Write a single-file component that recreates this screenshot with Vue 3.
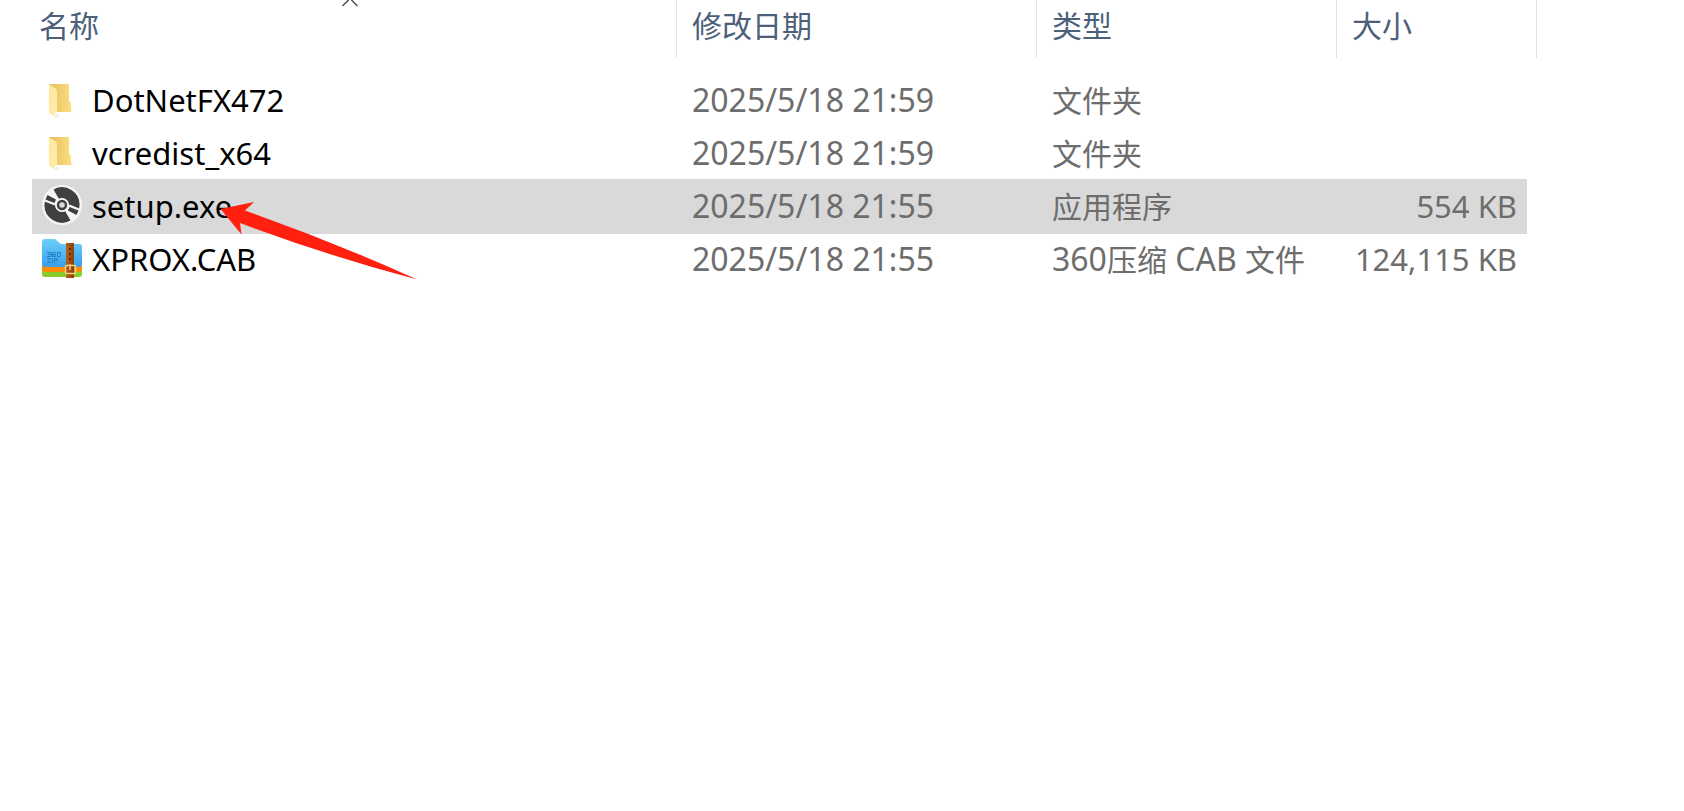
<script setup>
import { ref } from 'vue';

const files = [
    { name: 'DotNetFX472', icon: 'folder', date: '2025/5/18 21:59', type: '文件夹', size: '' },
    { name: 'vcredist_x64', icon: 'folder', date: '2025/5/18 21:59', type: '文件夹', size: '' },
    { name: 'setup.exe', icon: 'disc', date: '2025/5/18 21:55', type: '应用程序', size: '554 KB' },
    { name: 'XPROX.CAB', icon: 'zip', date: '2025/5/18 21:55', type: '360压缩 CAB 文件', size: '124,115 KB' },
];

const selected = ref('setup.exe');

// Chinese runs are set slightly smaller than the latin ones
const splitRuns = (text) =>
    text.split(/([\u4e00-\u9fff]+)/).filter(Boolean).map((run) => ({
        text: run,
        han: /[\u4e00-\u9fff]/.test(run),
    }));
</script>

<template>
    <main class="explorer">
        <table class="files">
            <colgroup>
                <col>
                <col class="col-date">
                <col class="col-type">
                <col class="col-size">
                <col class="col-end">
            </colgroup>
            <thead>
                <tr>
                    <th aria-sort="ascending">
                        <button class="head head-name">
                            名称
                            <svg class="sort" viewBox="0 0 16 8" aria-hidden="true">
                                <path d="M0.5 6 L8 -1.5 L15.5 6" fill="none" stroke="#444" stroke-width="1.3" />
                            </svg>
                        </button>
                    </th>
                    <th><button class="head">修改日期</button></th>
                    <th><button class="head">类型</button></th>
                    <th colspan="2"><button class="head">大小</button></th>
                </tr>
            </thead>
            <tbody>
                <tr
                    v-for="file in files"
                    :key="file.name"
                    :class="{ selected: file.name === selected }"
                    @click="selected = file.name"
                >
                    <td class="name">
                        <div class="name-box">
                            <svg v-if="file.icon === 'folder'" class="icon" viewBox="0 0 40 40" aria-hidden="true">
                                <defs>
                                    <linearGradient id="back" x1="0" y1="0" x2="1" y2="0">
                                        <stop offset="0.2" stop-color="#e9c463" />
                                        <stop offset="1" stop-color="#fbdd80" />
                                    </linearGradient>
                                    <linearGradient id="flap" x1="0" y1="0" x2="1" y2="1">
                                        <stop offset="0" stop-color="#ffe59a" />
                                        <stop offset="1" stop-color="#ffeeb2" />
                                    </linearGradient>
                                </defs>
                                <path d="M13 39 L18 37 L14 34 Z M29 34 L32 33 L29 31 Z" fill="#eee" />
                                <path d="M7 5 H27 V22 L29 24 V33 H13 Z" fill="url(#back)" />
                                <path d="M7 5 L13 9 Q15 10 15 12 V33 L13 34 V38.5 L7 33.500 Z" fill="url(#flap)" />
                            </svg>
                            <svg v-else-if="file.icon === 'disc'" class="icon" viewBox="0 0 40 40" aria-hidden="true">
                                <circle cx="20" cy="20" r="20" fill="#f5f5f5" />
                                <path d="M11.500 4.500 A17.500 17.500 0 0 1 37.500 21 L36.800 24.500 L26.500 20.500 A6.500 6.500 0 0 0 17 14 Z" fill="#404040" />
                                <path d="M28.500 35.500 A17.500 17.500 0 0 1 2.500 19 L3.200 15.500 L13.500 19.500 A6.500 6.500 0 0 0 23 26 Z" fill="#404040" />
                                <path d="M3 15.500 L13 19.500 M37 24.500 L27 20.500" stroke="#f5f5f5" stroke-width="2" />
                                <path d="M5.500 10 L14 14.500 L12.500 18 L3.500 14.500 Z M34.500 30 L26 25.500 L27.500 22 L36.500 25.500 Z" fill="#404040" />
                                <circle cx="20" cy="20" r="7" fill="#f5f5f5" />
                                <circle cx="20" cy="20" r="4" fill="#d9d9d9" stroke="#404040" stroke-width="2.400" />
                            </svg>
                            <svg v-else class="icon" viewBox="0 0 40 40" aria-hidden="true">
                                <defs>
                                    <linearGradient id="blue" x1="0" y1="0" x2="0" y2="1">
                                        <stop offset="0" stop-color="#6bd0fa" />
                                        <stop offset="1" stop-color="#3b9fec" />
                                    </linearGradient>
                                    <linearGradient id="belt" x1="0" y1="0" x2="1" y2="0">
                                        <stop offset="0" stop-color="#b8621c" />
                                        <stop offset="1" stop-color="#8a3e0a" />
                                    </linearGradient>
                                </defs>
                                <path d="M0 30 H40 V36 Q40 39 37 39 H3 Q0 39 0 36 Z" fill="#85cc2c" />
                                <path d="M0 26 H40 V31 Q40 34 37 34 H3 Q0 34 0 31 Z" fill="#ff8d0a" />
                                <path d="M0 4 Q0 1 3 1 H13 L19 6 H37 Q40 6 40 9 V26 Q40 29 37 29 H3 Q0 29 0 26 Z" fill="url(#blue)" />
                                <g fill="none" stroke="#237fc9" stroke-width="1">
                                    <path d="M5 14.5 H9 V18.5 H5 M6 16.5 H9 M14 14.5 H10.5 V18.5 H13.5 V16.5 H11 M15.5 14.5 H18.5 V18.5 H15.5 Z" />
                                    <path d="M5 20.5 H8.5 L5.5 24.5 H9 M10.5 20 V25 M12.5 25 V20.5 H15.5 V22.5 H12.5" />
                                </g>
                                <rect x="24" y="5" width="8" height="35" fill="url(#belt)" />
                                <path d="M27 10h2v2h-2z M27 15h2v2h-2z M27 20h2v2h-2z" fill="#59290a" />
                                <rect x="23.5" y="27.5" width="10" height="8" rx="1" fill="none" stroke="#f5cf7a" stroke-width="1.5" />
                                <path d="M28 26 V32" stroke="#f5cf7a" stroke-width="1.5" />
                            </svg>
                            <span>{{ file.name }}</span>
                            <svg v-if="file.name === 'setup.exe'" class="pointer" viewBox="0 0 198 78" aria-hidden="true">
                                <path d="M0.5 7 L34 0 L25 8.5 Q112 39 197 77.500 Q108 54 20 21 L21.500 32.500 Z" fill="#ff2010" />
                            </svg>
                        </div>
                    </td>
                    <td class="date">{{ file.date }}</td>
                    <td class="type">
                        <span v-for="(run, i) in splitRuns(file.type)" :key="i" :class="{ han: run.han }">{{ run.text }}</span>
                    </td>
                    <td class="size">{{ file.size }}</td>
                </tr>
            </tbody>
        </table>
    </main>
</template>

<style>
body {
    background: #fff;
}
</style>

<style scoped>
.explorer {
    padding: 0 147px 0 32px;
    font-family: "Noto Sans", "Noto Sans CJK SC", sans-serif;
    font-size: 31px;
    line-height: 40px;
    color: #6d6d6d;
}

.files {
    width: 100%;
    table-layout: fixed;
    border-collapse: separate;
    border-spacing: 0;
}

.col-date {
    width: 360px;
}

.col-type {
    width: 300px;
}

.col-size {
    width: 190px;
}

.col-end {
    width: 10px;
}

th {
    padding: 0 0 16px;
}

.head {
    position: relative;
    display: block;
    width: 100%;
    height: 58px;
    padding: 0 15px 10px;
    border: 0;
    border-right: 1px solid #e2e2e2;
    background: none;
    color: #4c607a;
    font-family: "Noto Sans CJK SC", sans-serif;
    font-size: 30px;
    line-height: 40px;
    text-align: left;
}

.head-name {
    width: calc(100% + 8px);
    margin-left: -8px;
}

.sort {
    position: absolute;
    top: 0;
    left: 50%;
    width: 16px;
    height: 8px;
    margin-left: -8px;
}

td {
    box-sizing: border-box;
    height: 53px;
    padding: 0 0 2px 15px;
    white-space: nowrap;
}

td.name {
    padding-left: 10px;
    color: #000;
}

.name-box {
    position: relative;
    display: flex;
    align-items: center;
    gap: 10px;
}

.icon {
    flex: none;
    width: 40px;
    height: 40px;
    margin-bottom: 2px;
}

.pointer {
    position: absolute;
    z-index: 1;
    top: 17px;
    left: 178px;
    width: 198px;
    height: 78px;
}

td.date,
td.type {
    font-size: 32px;
}

td.type {
    padding-bottom: 0;
}

td.size {
    padding: 0 10px 2px 0;
    text-align: right;
}

.han {
    font-size: 30px;
}

.selected td {
    background: #d9d9d9;
    box-shadow: 0 -1px #d9d9d9, 0 1px #d9d9d9;
}
</style>
